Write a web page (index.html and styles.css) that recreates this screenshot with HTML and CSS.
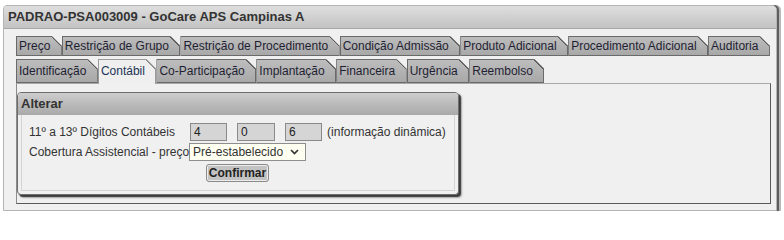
FILE: index.html
```html
<!DOCTYPE html>
<html lang="pt-BR">
<head>
<meta charset="utf-8">
<title>GoCare APS Campinas A</title>
<link rel="stylesheet" href="styles.css">
</head>
<body>
<div class="window">
  <div class="titlebar">PADRAO-PSA003009 - GoCare APS Campinas A</div>
  <div class="window-body">
    <div class="tabrow row1">
      <div class="tab">Preço</div>
      <div class="tab">Restrição de Grupo</div>
      <div class="tab">Restrição de Procedimento</div>
      <div class="tab">Condição Admissão</div>
      <div class="tab">Produto Adicional</div>
      <div class="tab">Procedimento Adicional</div>
      <div class="tab">Auditoria</div>
    </div>
    <div class="tabrow row2">
      <div class="tab">Identificação</div>
      <div class="tab active">Contábil</div>
      <div class="tab">Co-Participação</div>
      <div class="tab">Implantação</div>
      <div class="tab">Financeira</div>
      <div class="tab">Urgência</div>
      <div class="tab">Reembolso</div>
    </div>
    <div class="panel">
      <div class="box">
        <div class="box-head">Alterar</div>
        <div class="box-body">
          <div class="form-grid">
            <label class="lbl">11º a 13º Dígitos Contábeis</label>
            <div class="field-line">
              <input class="digit" type="text" value="4">
              <input class="digit" type="text" value="0">
              <input class="digit" type="text" value="6">
              <span class="hint">(informação dinâmica)</span>
            </div>
            <label class="lbl">Cobertura Assistencial - preço</label>
            <div class="field-line">
              <span class="select-wrap">
                <select class="sel"><option>Pré-estabelecido</option></select>
                <svg class="chev" width="9" height="6" viewBox="0 0 9 6"><polyline points="1,1 4.5,4.5 8,1" fill="none" stroke="#333" stroke-width="1.7"/></svg>
              </span>
            </div>
          </div>
          <div class="actions"><button class="btn" type="button">Confirmar</button></div>
        </div>
      </div>
    </div>
  </div>
</div>
</body>
</html>
```

FILE: styles.css
```css
* { box-sizing: border-box; }
html, body {
  margin: 0;
  padding: 0;
  background: #ffffff;
  font-family: "Liberation Sans", Arial, sans-serif;
  font-size: 12px;
  color: #333;
}
.window {
  margin: 5px 0 0 3px;
  width: 774px;
  border: 1px solid #b4b4b4;
  border-radius: 4px 5px 0 0;
  background: #f0f0f0;
  box-shadow: 2px 0 0 #5e5e5e, 4px 0 0 #b8b8b8;
}
.titlebar {
  height: 23px;
  line-height: 22px;
  padding-left: 4px;
  font-weight: bold;
  font-size: 13px;
  color: #333;
  background: linear-gradient(#dedede, #c3c3c3);
  border-bottom: 1px solid #a8a8a8;
  border-radius: 3px 4px 0 0;
}
.window-body {
  padding: 7px 5px 6px 12px;
}
.tabrow {
  display: flex;
  align-items: flex-start;
}
.row1 { height: 20px; }
.row2 { height: 24px; margin-top: 3px; position: relative; z-index: 1; }
.tab {
  height: 20px;
  line-height: 18px;
  padding: 0 10.5px 0 2px;
  white-space: nowrap;
  color: #1f1f33;
  border: 1px solid #6a6a6a;
  background:
    linear-gradient(to top right, transparent calc(50% - 1.3px), #5a5a5a calc(50% - 1.3px)) top right / 10px 10px no-repeat,
    linear-gradient(#bebebe, #a7a7a7);
  background-origin: border-box;
  clip-path: polygon(0 0, calc(100% - 10px) 0, 100% 10px, 100% 100%, 0 100%);
}
.row2 .tab {
  height: 24px;
  line-height: 22px;
}
.row2 .tab.active {
  height: 25px;
  border-color: #9a9a9a;
  border-bottom: none;
  color: #223355;
  background:
    linear-gradient(to top right, transparent calc(50% - 1.3px), #8a8a8a calc(50% - 1.3px)) top right / 10px 10px no-repeat,
    #efefef;
  background-origin: border-box;
}
.panel {
  height: 121px;
  border: 1px solid #8c8c8c;
  border-top-color: #a8a8a8;
  border-right-color: #5a5a5a;
  border-bottom-color: #5a5a5a;
  background: #f0f0f0;
  padding: 8px 0 0 0;
}
.box {
  width: 442px;
  border: 1px solid #6e6e6e;
  border-radius: 4px;
  background: #f0f0f0;
  box-shadow: 2px 2px 1px #3c3c3c, 3px 3px 2px rgba(0,0,0,0.25);
}
.box-head {
  height: 22px;
  line-height: 21px;
  padding-left: 3px;
  font-weight: bold;
  font-size: 13px;
  color: #333;
  background: linear-gradient(#cdcdcd, #a9a9a9);
  border-radius: 3px 3px 0 0;
}
.box-body {
  margin: 0 3px 3px 3px;
  border: 1px solid #d4d4d4;
  border-top: none;
  padding: 8px 6px 8px 7px;
}
.form-grid {
  display: grid;
  grid-template-columns: max-content 1fr;
  row-gap: 2px;
  align-items: center;
}
.lbl {
  color: #333;
  white-space: nowrap;
  line-height: 18px;
}
.field-line {
  display: flex;
  align-items: center;
  height: 18px;
}
.digit {
  width: 37px;
  height: 18px;
  margin: 0 10px 0 0;
  padding: 0 3px;
  border: 1px solid #8a8a8a;
  background: #d5d5d5;
  font-family: "Liberation Sans", Arial, sans-serif;
  font-size: 12px;
  color: #222;
  outline: none;
}
.field-line .digit:first-child { margin-left: 1px; }
.field-line .digit:nth-child(2) { width: 38px; }
.field-line .digit:nth-child(3) { margin-right: 5px; }
.hint { color: #333; white-space: nowrap; }
.select-wrap {
  position: relative;
  display: inline-block;
  height: 18px;
}
.sel {
  -webkit-appearance: none;
  appearance: none;
  width: 117px;
  height: 18px;
  margin: 0;
  padding: 0 0 0 3px;
  border: 1px solid #8e8e8e;
  border-radius: 0;
  background: #fffff2;
  font-family: "Liberation Sans", Arial, sans-serif;
  font-size: 12px;
  color: #333;
  outline: none;
}
.chev {
  position: absolute;
  right: 7px;
  top: 6px;
  pointer-events: none;
}
.actions {
  display: flex;
  justify-content: center;
  margin-top: 3px;
  padding-right: 2px;
}
.btn {
  height: 18px;
  padding: 0 2px;
  border: 1px solid #8a8a8a;
  border-radius: 3px;
  background: #c3c3c3;
  box-shadow: inset 0 0 0 1px #ececec;
  font-family: "Liberation Sans", Arial, sans-serif;
  font-weight: bold;
  font-size: 12px;
  line-height: 15px;
  color: #222;
}
```
